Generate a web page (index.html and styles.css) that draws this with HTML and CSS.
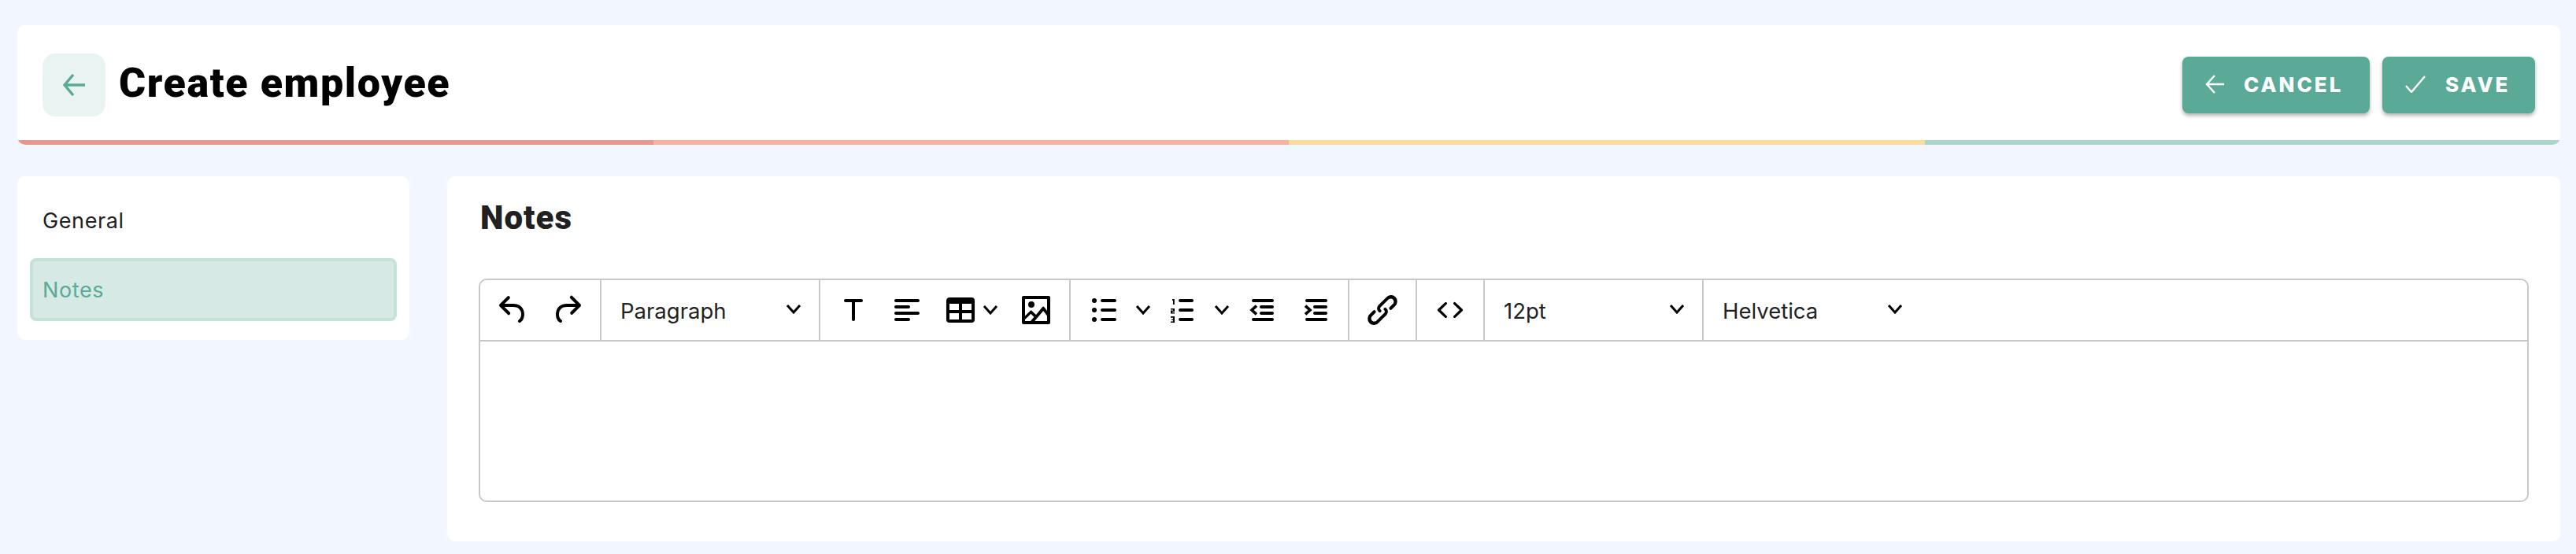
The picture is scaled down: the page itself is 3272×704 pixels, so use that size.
FILE: index.html
```html
<!DOCTYPE html>
<html lang="en">
<head>
    <meta charset="UTF-8">
    <meta name="viewport" content="width=device-width, initial-scale=1.0">
    <title>Create employee</title>
    <link rel="stylesheet" href="styles.css">
</head>
<body>
    <!-- Page header -->
    <header class="page-header">
        <div class="header-row">
            <div class="header-left">
                <a class="back-link" href="#">
                    <svg width="28" height="28" viewBox="0 0 28 28" fill="none" stroke="#5ba997" stroke-width="3.4"><path d="M28 14H2M13 1 2 14l11 13"/></svg>
                </a>
                <h1>Create employee</h1>
            </div>
            <div class="header-actions">
                <button class="btn btn-cancel">
                    <svg width="24" height="24" viewBox="0 0 24 24" fill="none" stroke="#fff" stroke-width="2.4"><path d="M24 12H2M12 1 2 12l10 11"/></svg>
                    CANCEL
                </button>
                <button class="btn btn-save">
                    <svg width="26" height="22" viewBox="0 0 26 22" fill="none" stroke="#fff" stroke-width="2.4"><path d="m1 13 7 8L25 1"/></svg>
                    SAVE
                </button>
            </div>
        </div>
        <div class="progress">
            <span class="seg-red"></span>
            <span class="seg-salmon"></span>
            <span class="seg-yellow"></span>
            <span class="seg-teal"></span>
        </div>
    </header>

    <div class="content">
        <!-- Tabs -->
        <nav class="side-nav">
            <a class="nav-item" href="#">General</a>
            <a class="nav-item active" href="#">Notes</a>
        </nav>

        <main class="panel">
            <h2>Notes</h2>

            <!-- Rich text editor -->
            <div class="editor">
                <div class="toolbar">
                    <div class="group">
                        <span class="tool"><svg class="icon" viewBox="0 0 24 24"><path d="M6.4 8H12c3.7 0 6.2 2 6.8 5.1.6 2.7-.4 5.6-2.3 6.8a1 1 0 0 1-1-1.8c1.1-.6 1.8-2.7 1.4-4.6-.5-2.1-2.1-3.5-4.9-3.5H6.4l3.3 3.3a1 1 0 1 1-1.4 1.4l-5-5a1 1 0 0 1 0-1.4l5-5a1 1 0 0 1 1.4 1.4L6.4 8z"/></svg></span>
                        <span class="tool"><svg class="icon" viewBox="0 0 24 24"><path d="M17.6 10H12c-2.8 0-4.4 1.4-4.9 3.5-.4 2 .3 4 1.4 4.6a1 1 0 1 1-1 1.8c-2-1.2-2.9-4.1-2.3-6.8.6-3 3-5.1 6.8-5.1h5.6l-3.3-3.3a1 1 0 1 1 1.4-1.4l5 5a1 1 0 0 1 0 1.4l-5 5a1 1 0 0 1-1.4-1.4l3.3-3.3z"/></svg></span>
                    </div>
                    <div class="select select-block">
                        <span>Paragraph</span>
                        <svg class="chevron" viewBox="0 0 20 14"><path d="m2 2 8 9 8-9"/></svg>
                    </div>
                    <div class="group">
                        <span class="tool"><svg class="icon" viewBox="0 0 24 24"><rect x="6" y="5" width="12" height="2" rx="1"/><path d="M11 6h2v12a1 1 0 0 1-2 0z"/></svg></span>
                        <span class="tool"><svg class="icon" viewBox="0 0 24 24"><path d="M5 5h14c.6 0 1 .4 1 1s-.4 1-1 1H5a1 1 0 1 1 0-2zm0 4h8c.6 0 1 .4 1 1s-.4 1-1 1H5a1 1 0 1 1 0-2zm0 8h8c.6 0 1 .4 1 1s-.4 1-1 1H5a1 1 0 0 1 0-2zm0-4h14c.6 0 1 .4 1 1s-.4 1-1 1H5a1 1 0 0 1 0-2z"/></svg></span>
                        <span class="tool split split-table">
                            <svg class="icon" viewBox="0 0 24 24"><path d="M19 4a2 2 0 0 1 2 2v12a2 2 0 0 1-2 2H5a2 2 0 0 1-2-2V6c0-1.100.9-2 2-2h14zM5 14v4h6v-4H5zm14 0h-6v4h6v-4zm0-6h-6v4h6V8zM5 12h6V8H5v4z"/></svg>
                            <svg class="chevron" viewBox="0 0 20 14"><path d="m2 2 8 9 8-9"/></svg>
                        </span>
                        <span class="tool"><svg class="icon" viewBox="0 0 24 24"><path fill-rule="evenodd" d="M4 3h16a1 1 0 0 1 1 1v16a1 1 0 0 1-1 1H4a1 1 0 0 1-1-1V4a1 1 0 0 1 1-1zm1 2v10.700l3.300-3.200c.3-.3.7-.3 1 0L12 15l4.100-5c.3-.4.8-.4 1 0l1.900 2.500V5H5zm0 13v1h3.500l2.200-2.600-2-2zm6.100 1H19v-3.300l-2.400-3.200zM9 6.500a2 2 0 1 1 0 4 2 2 0 0 1 0-4z"/></svg></span>
                    </div>
                    <div class="group">
                        <span class="tool split split-bullets">
                            <svg class="icon" viewBox="0 0 24 24"><circle cx="6" cy="6" r="1.500"/><circle cx="6" cy="12" r="1.500"/><circle cx="6" cy="18" r="1.500"/><rect x="10" y="5" width="10" height="2" rx="1"/><rect x="10" y="11" width="10" height="2" rx="1"/><rect x="10" y="17" width="10" height="2" rx="1"/></svg>
                            <svg class="chevron" viewBox="0 0 20 14"><path d="m2 2 8 9 8-9"/></svg>
                        </span>
                        <span class="tool split split-numbers">
                            <svg class="icon" viewBox="0 0 24 24"><rect x="10.500" y="5" width="9.500" height="2" rx="1"/><rect x="10.500" y="11" width="9.500" height="2" rx="1"/><rect x="10.500" y="17" width="9.500" height="2" rx="1"/><path d="M6.500 5h1.400v3.500H7V6H6.500zM5.500 11H8v2H6.500v.5H8v.8H5.500v-2H7v-.5H5.500zM5.500 16H8v4H5.500v-.8H7v-.8H6v-.7h1v-.8H5.500z"/></svg>
                            <svg class="chevron" viewBox="0 0 20 14"><path d="m2 2 8 9 8-9"/></svg>
                        </span>
                        <span class="tool"><svg class="icon" viewBox="0 0 24 24"><rect x="6" y="5" width="14" height="2" rx="1"/><rect x="11" y="9" width="9" height="2" rx="1"/><rect x="11" y="13" width="9" height="2" rx="1"/><rect x="6" y="17" width="14" height="2" rx="1"/><path d="M9 9.300 6 12l3 2.700" fill="none" stroke="#000" stroke-width="1.800"/></svg></span>
                        <span class="tool"><svg class="icon" viewBox="0 0 24 24"><rect x="6" y="5" width="14" height="2" rx="1"/><rect x="11" y="9" width="9" height="2" rx="1"/><rect x="11" y="13" width="9" height="2" rx="1"/><rect x="6" y="17" width="14" height="2" rx="1"/><path d="M6 9.300 9 12l-3 2.700" fill="none" stroke="#000" stroke-width="1.800"/></svg></span>
                    </div>
                    <div class="group">
                        <span class="tool"><svg class="icon" viewBox="0 0 24 24"><path d="M6.200 12.300a1 1 0 0 1 1.400 1.400l-2 2a2 2 0 1 0 2.800 2.800l4.800-4.800a1 1 0 0 0 0-1.400 1 1 0 1 1 1.400-1.300 2.900 2.900 0 0 1 0 4.100l-4.800 4.800a4 4 0 1 1-5.600-5.600l2-2zm11.600-.6a1 1 0 0 1-1.400-1.400l2-2a2 2 0 1 0-2.800-2.800L10.800 10.300a1 1 0 0 0 0 1.400 1 1 0 1 1-1.400 1.300 2.900 2.900 0 0 1 0-4.100l4.800-4.800a4 4 0 1 1 5.600 5.600l-2 2z"/></svg></span>
                    </div>
                    <div class="group">
                        <span class="tool"><svg class="icon" viewBox="0 0 24 24"><path d="M9.800 15.700c.3.300.3.800 0 1-.3.400-.9.400-1.200 0l-4.400-4.100a.800.800 0 0 1 0-1.200l4.400-4.200c.3-.3.900-.3 1.200 0 .3.300.3.800 0 1.100L6 12l3.800 3.700zM14.200 15.700c-.3.300-.3.800 0 1 .3.400.9.400 1.200 0l4.400-4.100c.3-.3.300-.9 0-1.200l-4.400-4.200a.800.800 0 0 0-1.200 0c-.3.300-.3.800 0 1.100L18 12l-3.800 3.700z"/></svg></span>
                    </div>
                    <div class="select select-size">
                        <span>12pt</span>
                        <svg class="chevron" viewBox="0 0 20 14"><path d="m2 2 8 9 8-9"/></svg>
                    </div>
                    <div class="select select-font">
                        <span>Helvetica</span>
                        <svg class="chevron" viewBox="0 0 20 14"><path d="m2 2 8 9 8-9"/></svg>
                    </div>
                </div>
                <div class="editor-body"></div>
            </div>
        </main>
    </div>
</body>
</html>
```

FILE: styles.css
```css
* {
    margin: 0;
    padding: 0;
    box-sizing: border-box;
}

body {
    font-family: "Inter", sans-serif;
    background: #f2f6fe;
    padding: 32px 20px 16px 22px;
    height: 704px;
    overflow: hidden;
}

/* header */
.page-header {
    background: #fff;
    border-radius: 10px;
    overflow: hidden;
    height: 152px;
}

.header-row {
    height: 146px;
    display: flex;
    justify-content: space-between;
    align-items: center;
    padding: 6px 32px 0;
}

.header-left {
    display: flex;
    align-items: center;
    gap: 17px;
}

.back-link {
    width: 80px;
    height: 80px;
    border-radius: 16px;
    background: #e9f3f1;
    display: flex;
    align-items: center;
    justify-content: center;
}

h1 {
    font-family: "Roboto", sans-serif;
    font-size: 52px;
    line-height: 60px;
    margin-top: -4px;
    font-weight: 900;
    letter-spacing: 1.6px;
    color: #000;
}

.header-actions {
    display: flex;
    gap: 16px;
}

.btn {
    height: 72px;
    border: none;
    border-radius: 8px;
    background: #5ba997;
    color: #fff;
    font-family: "Inter", sans-serif;
    font-size: 26px;
    font-weight: 800;
    letter-spacing: 3px;
    display: flex;
    align-items: center;
    padding-bottom: 2px;
    box-shadow: 0 3px 5px rgba(0, 0, 0, 0.3);
}

.btn-cancel {
    width: 238px;
    padding-left: 29px;
    gap: 25px;
}

.btn-save {
    width: 194px;
    padding-left: 29px;
    gap: 25px;
}

.progress {
    display: flex;
    height: 6px;
}

.progress span {
    flex: 1;
}

.seg-red { background: #e8978f; }
.seg-salmon { background: #f7b19e; }
.seg-yellow { background: #fcdc9a; }
.seg-teal { background: #a9d5ca; }

/* content */
.content {
    display: flex;
    align-items: flex-start;
    gap: 48px;
    margin-top: 40px;
}

.side-nav {
    width: 498px;
    height: 208px;
    flex-shrink: 0;
    background: #fff;
    border-radius: 10px;
    padding: 16px;
    display: flex;
    flex-direction: column;
    gap: 8px;
}

.nav-item {
    height: 80px;
    padding-left: 12px;
    display: flex;
    align-items: center;
    font-size: 27px;
    letter-spacing: 0.6px;
    color: #212121;
    text-decoration: none;
    border: 4px solid transparent;
    border-radius: 8px;
}

.nav-item.active {
    background: #d6e9e4;
    border-color: #c5e1d9;
    color: #5ba997;
}

.panel {
    flex: 1;
    height: 464px;
    background: #fff;
    border-radius: 10px;
    padding: 30px 40px 0 42px;
}

h2 {
    font-family: "Roboto", sans-serif;
    font-size: 42px;
    font-weight: 900;
    line-height: 46px;
    letter-spacing: 1px;
    color: #212121;
}

/* editor */
.editor {
    margin-top: 54px;
    margin-left: -2px;
    height: 284px;
    border: 2px solid #c8c8c8;
    border-radius: 10px;
}

.toolbar {
    display: flex;
    height: 78px;
    border-bottom: 2px solid #c8c8c8;
    color: #000;
}

.group {
    display: flex;
    align-items: center;
    padding: 0 8px;
    border-right: 2px solid #c8c8c8;
}

.tool {
    width: 68px;
    height: 48px;
    display: flex;
    align-items: center;
    padding-left: 10px;
}

.tool.split-table { width: 96px; }
.tool.split-bullets { width: 98px; }
.tool.split-numbers { width: 102px; }

.icon {
    width: 48px;
    height: 48px;
    flex-shrink: 0;
    fill: #000;
}

.chevron {
    width: 20px;
    height: 14px;
    flex-shrink: 0;
    fill: none;
    stroke: #000;
    stroke-width: 3;
}

.tool.split-table .chevron { margin-left: 4px; }
.tool.split-bullets .chevron { margin-left: 16px; }
.tool.split-numbers .chevron { margin-left: 18px; }

.select {
    width: 278px;
    display: flex;
    align-items: center;
    justify-content: space-between;
    padding: 2px 22px 0 24px;
    font-size: 27.5px;
    color: #222;
    border-right: 2px solid #c8c8c8;
}

.select .chevron {
    margin-top: -4px;
}

.select-font {
    width: 275px;
    border-right: none;
}
```
